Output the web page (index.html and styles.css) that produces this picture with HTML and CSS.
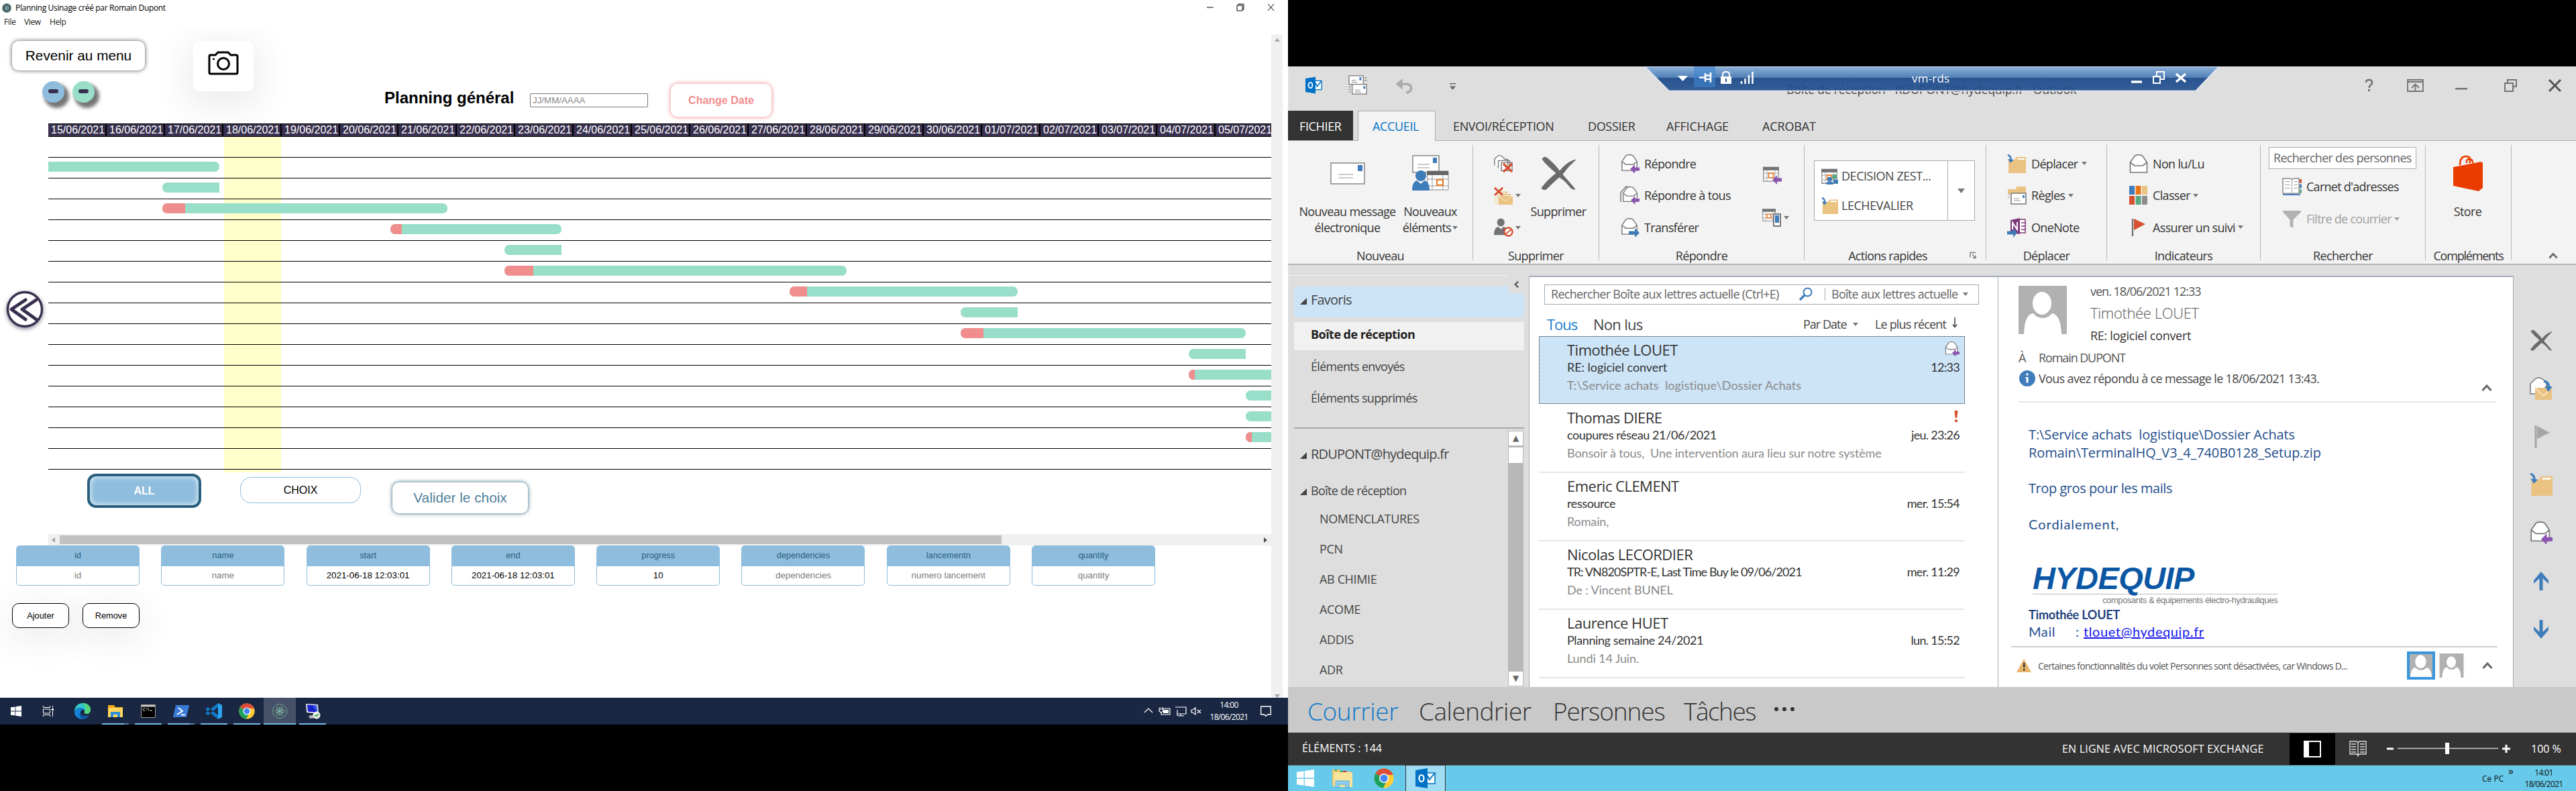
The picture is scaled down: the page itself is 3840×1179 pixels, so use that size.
FILE: index.html
```html
<!DOCTYPE html>
<html lang="fr">
<head>
<meta charset="utf-8">
<title>Planning Usinage</title>
<link rel="stylesheet" href="styles.css">
</head>
<body>
<svg class="sprite" aria-hidden="true">
  <symbol id="env" viewBox="0 0 28 28"><path d="M1.500 12 8 2.500Q14-1 20 2.500L26.500 12V27H1.500Z" fill="#fff" stroke="#777" stroke-width="1.600"/><path d="M1.500 12 8 17H20L26.500 12" fill="none" stroke="#777" stroke-width="1.600"/></symbol>
  <symbol id="reply" viewBox="0 0 28 28"><use href="#env" width="26" height="25"/><path d="M14 22 21 15V19.500H28V24.500H21V29Z" fill="#8a55b0"/></symbol>
  <symbol id="forward" viewBox="0 0 28 28"><use href="#env" width="26" height="25"/><path d="M28 22 21 15V19.500H12V24.500H21V29Z" fill="#3f7cba"/></symbol>
  <symbol id="cal" viewBox="0 0 28 28"><path d="M1 3H27V27H1Z" fill="#fff" stroke="#888" stroke-width="1.500"/><path d="M0 2H28V8H0Z" fill="#737373"/><path d="M7 8V27M21 8V27M1 13H27M1 21H27" stroke="#999"/><path d="M10 13H18V21H10Z" fill="#fff" stroke="#e87722" stroke-width="2"/></symbol>
  <symbol id="move" viewBox="0 0 28 28"><path d="M2 8H11L14 4H28V28H2Z" fill="#eac282"/><path d="M16 6H26V8H15Z" fill="#fff"/><path d="M1 1Q7 3 5.500 11" fill="none" stroke="#3f7cba" stroke-width="2.600"/><path d="M1 7 5 13 10 8Z" fill="#3f7cba"/></symbol>
  <symbol id="cross" viewBox="0 0 54 50"><path d="M3 4Q6-1 11 3 22 12 29 22 40 8 53 5 41 15 33 27 43 38 52 49 47 50 43 44 35 34 28 31 18 40 9 49 4 51 2 47 11 35 24 25 8 12 3 4Z" fill="#6a6a6a" stroke="#6a6a6a"/></symbol>
  <symbol id="person" viewBox="0 0 72 72"><path d="M0 0H72V72H0Z" fill="#b1b1b1"/><ellipse cx="35" cy="26" rx="14" ry="17" fill="#fff"/><path d="M8 72Q9 42 22 41 27 48 36 48 44 48 50 41 63 43 64 72Z" fill="#fff"/></symbol>
  <symbol id="chrome" viewBox="0 0 30 30"><circle cx="15" cy="15" r="14.500" fill="#fc3"/><path d="M15 15 2.400 7.800A14.500 14.500 0 0 1 28.600 10H15Z" fill="#dd4b39"/><path d="M2.400 7.800A14.500 14.500 0 0 0 14 29.500L19.500 18 15 15Z" fill="#1ba15d"/><circle cx="15" cy="15" r="7" fill="#fff"/><circle cx="15" cy="15" r="5.500" fill="#4285f4"/></symbol>
  <symbol id="outlook" viewBox="0 0 30 30"><path d="M16 7H29V23H16Z" fill="#fff" stroke="#0072c6" stroke-width="1.600"/><path d="M17 10 21 17 28 8" fill="none" stroke="#0072c6" stroke-width="2"/><path d="M0 3 18 0V30L0 27Z" fill="#0072c6"/><ellipse cx="9" cy="15" rx="3.500" ry="5" fill="none" stroke="#fff" stroke-width="2.200"/></symbol>
  <symbol id="atom" viewBox="0 0 24 24"><circle cx="12" cy="12" r="11.500" fill="#474e55" stroke="#7cc" stroke-width=".8"/><g fill="none" stroke="#8cc" stroke-width=".8"><ellipse cx="12" cy="12" rx="8" ry="3.200"/><ellipse cx="12" cy="12" rx="8" ry="3.200" transform="rotate(60 12 12)"/><ellipse cx="12" cy="12" rx="8" ry="3.200" transform="rotate(120 12 12)"/></g><circle cx="12" cy="12" r="1.500" fill="#9ff"/></symbol>
  <symbol id="win" viewBox="0 0 16 16"><path d="M0 2.300 6.500 1.400V7.600H0ZM7.300 1.300 16 0V7.600H7.300ZM0 8.400H6.500V14.600L0 13.700ZM7.300 8.400H16V16L7.300 14.700Z" fill="#fff"/></symbol>
  <symbol id="dd" viewBox="0 0 8 5"><path d="M0 0H8L4 5Z" fill="currentColor"/></symbol>
  <symbol id="up" viewBox="0 0 16 10"><path d="M1.500 9 8 2 14.500 9" fill="none" stroke="currentColor" stroke-width="3"/></symbol>
</svg>

<div class="desk">
<section class="screen">
  <div class="title-bar">
    <svg class="app-icon"><use href="#atom"/></svg>
    <span class="app-title">Planning Usinage créé par Romain Dupont</span>
    <svg class="win-btns" viewBox="0 0 101 12"><path d="M0 6H10M45 3H53V11H45ZM47 3V1H55V9H53M91 1 100 11M100 1 91 11" fill="none" stroke="#000"/></svg>
  </div>
  <nav class="menu"><span>File</span><span>View</span><span>Help</span></nav>

  <div class="app">
    <main class="app-main">
      <div class="top">
        <div class="top-left">
          <button class="back">Revenir au menu</button>
          <div class="zoomers"><i class="dot blue"></i><i class="dot green"></i></div>
        </div>
        <div class="camera">
          <svg viewBox="0 0 46 36"><path d="M4 6H11L15 2H30L34 6H42Q44 6 44 8V32Q44 34 42 34H4Q2 34 2 32V8Q2 6 4 6Z" fill="none" stroke="#000" stroke-width="3"/><circle cx="23" cy="19" r="8.500" fill="none" stroke="#000" stroke-width="3"/><circle cx="8.500" cy="12" r="1.600"/></svg>
        </div>
        <div class="heading">
          <h1>Planning général</h1>
          <div class="date-input">JJ/MM/AAAA</div>
          <button class="change">Change Date</button>
        </div>
      </div>
      <div class="mid">
        <div class="prev"><svg viewBox="0 0 60 60"><circle cx="30" cy="30" r="25.500" fill="#fff" stroke="#38304e" stroke-width="3.400"/><path d="M31 16 10 30 31 45M47 16 26 30 47 45" fill="none" stroke="#38304e" stroke-width="5" stroke-linecap="round" stroke-linejoin="round"/></svg></div>
        <div class="gantt">
          <div class="days"><b>15/06/2021</b><b>16/06/2021</b><b>17/06/2021</b><b>18/06/2021</b><b>19/06/2021</b><b>20/06/2021</b><b>21/06/2021</b><b>22/06/2021</b><b>23/06/2021</b><b>24/06/2021</b><b>25/06/2021</b><b>26/06/2021</b><b>27/06/2021</b><b>28/06/2021</b><b>29/06/2021</b><b>30/06/2021</b><b>01/07/2021</b><b>02/07/2021</b><b>03/07/2021</b><b>04/07/2021</b><b>05/07/2021</b></div>
          <div class="rows">
            <div class="row"></div>
            <div class="row"><div class="bar cont" style="margin-left:0;width:255px"></div></div>
            <div class="row"><div class="bar short" style="margin-left:170px;width:85px"></div></div>
            <div class="row"><div class="bar" style="margin-left:170px;width:425px"><i style="width:34px"></i></div></div>
            <div class="row"><div class="bar" style="margin-left:510px;width:255px"><i style="width:17px"></i></div></div>
            <div class="row"><div class="bar short" style="margin-left:680px;width:85px"></div></div>
            <div class="row"><div class="bar" style="margin-left:680px;width:510px"><i style="width:43px"></i></div></div>
            <div class="row"><div class="bar" style="margin-left:1105px;width:340px"><i style="width:26px"></i></div></div>
            <div class="row"><div class="bar short" style="margin-left:1360px;width:85px"></div></div>
            <div class="row"><div class="bar" style="margin-left:1360px;width:425px"><i style="width:34px"></i></div></div>
            <div class="row"><div class="bar short" style="margin-left:1700px;width:85px"></div></div>
            <div class="row"><div class="bar" style="margin-left:1700px;width:170px"><i style="width:9px"></i></div></div>
            <div class="row"><div class="bar" style="margin-left:1785px;width:85px"></div></div>
            <div class="row"><div class="bar" style="margin-left:1785px;width:85px"></div></div>
            <div class="row"><div class="bar" style="margin-left:1785px;width:170px"><i style="width:9px"></i></div></div>
            <div class="row"></div>
          </div>
          <div class="choices"><button class="all">ALL</button><button class="choix">CHOIX</button><button class="valid">Valider le choix</button></div>
          <div class="hscroll"><svg viewBox="0 0 5 8"><path d="M5 0V8L0 4Z" fill="#a3a3a3"/></svg><i class="thumb"></i><svg class="end" viewBox="0 0 5 8"><path d="M0 0V8L5 4Z" fill="#505050"/></svg></div>
        </div>
      </div>
      <div class="fields">
        <div class="field"><div>id</div><p>id</p></div>
        <div class="field"><div>name</div><p>name</p></div>
        <div class="field set"><div>start</div><p>2021-06-18 12:03:01</p></div>
        <div class="field set"><div>end</div><p>2021-06-18 12:03:01</p></div>
        <div class="field set"><div>progress</div><p>10</p></div>
        <div class="field"><div>dependencies</div><p>dependencies</p></div>
        <div class="field"><div>lancementn</div><p>numero lancement</p></div>
        <div class="field"><div>quantity</div><p>quantity</p></div>
      </div>
      <div class="ops"><button>Ajouter</button><button>Remove</button></div>
    </main>
    <div class="vscroll"><svg viewBox="0 0 8 5"><path d="M0 5H8L4 0Z" fill="#a3a3a3"/></svg><svg viewBox="0 0 8 5"><path d="M0 0H8L4 5Z" fill="#a3a3a3"/></svg></div>
  </div>

  <div class="taskbar">
    <div class="task start"><svg class="i16"><use href="#win"/></svg></div>
    <div class="task start"><svg class="i16" viewBox="0 0 16 16"><path d="M.5 0V2.500H10.500V0M.5 5H10.500V11H.5ZM.5 16V13.500H10.500V16M14.500 0V2.500M14.500 8V16" fill="none" stroke="#fff"/><path d="M13 4H16V7H13Z" fill="#fff"/></svg></div>
    <div class="task edge"><svg class="i24" viewBox="0 0 24 24"><path d="M0 13C0 4 6 0 12 0 20 0 24 5 24 10 24 14 21 16 18 16 14 16 15 14 15 12 15 9 12 7 9 7 4 7 1 10 0 13Z" fill="#34c6c9"/><path d="M12 0C20 0 24 5 24 10 24 14 21 16 18 16 14 16 15 14 15 12 18 8 16 3 12 0Z" fill="#55d67a"/><path d="M0 13C1 9 5 7 9 7 12 7 14 8 15 10 11 9 9 12 9 14 9 19 15 21 22 18 19 22 16 24 12 24 5 24 0 19 0 13Z" fill="#1683d8"/><path d="M9 14C9 19 15 21 22 18 19 22 16 24 13 24 8 23 6 18 9 14Z" fill="#0e56a4"/></svg></div>
    <div class="task run multi"><svg class="i22" viewBox="0 0 22 20"><path d="M0 1H9L11 4H22V19H0Z" fill="#f0a91b"/><path d="M0 5H22V19H0Z" fill="#ffd55e"/><path d="M4 19V11H18V19H14V15H8V19Z" fill="#2b8fd8"/></svg></div>
    <div class="task run"><svg class="i22" viewBox="0 0 22 20"><path d="M.5.500H21.500V19.500H.5Z" fill="#000" stroke="#999"/><path d="M1 1H21V3.500H1Z" fill="#ccc"/><path d="M6 6C4 5 3 6 3 7.500S4 10 6 9M8 6V7M8 8V9M10 5 12 9M13 9H17" stroke="#ddd" fill="none"/></svg></div>
    <div class="task run multi"><svg class="i24" viewBox="0 0 24 20"><path d="M4 1H24L20 19H0Z" fill="#3a7bd5"/><path d="M8 5 14 10 6 15M12 15.500H18" stroke="#fff" stroke-width="2" fill="none"/></svg></div>
    <div class="task run"><svg class="i24" viewBox="0 0 24 24"><path d="M18 0 24 3V21L18 24Z" fill="#2ba3ef"/><path d="M18 0V6L3 18 0 16V14ZM18 24V18L3 6 0 8V10Z" fill="#1279c4"/></svg></div>
    <div class="task run"><svg class="i24"><use href="#chrome"/></svg></div>
    <div class="task run active"><svg class="i22"><use href="#atom"/></svg></div>
    <div class="task run"><svg class="i24" viewBox="0 0 24 24"><path d="M2 1 20 2 21 16 3 14Z" fill="#dde"/><path d="M4 2.500 18 3.500 19 14 5 12.500Z" fill="#1522c8"/><path d="M12 3.200 18 3.500 19 14Z" fill="#3b57ea"/><path d="M6 19 16 17 18 22 8 23Z" fill="#bbb"/><circle cx="18" cy="18" r="5.500" fill="#eee"/><path d="M15 20 18 17M18 20 21 16" stroke="#3a3" stroke-width="1.500"/></svg></div>
    <div class="tray">
      <svg class="tray-icons" viewBox="0 0 86 16"><g fill="none" stroke="#fff" stroke-width="1.200"><path d="M1 10 7 4 13 10"/><path d="M28 4H39V13H26V9"/><path d="M24 2V5M28 2V5M23 5H29V8L26 10 23 8Z"/><path d="M47 2H63V12H50M55 12V15M51 15H60M50 6V15"/><path d="M71 6H73L77 3V13L73 10H71ZM80 6 85 11M85 6 80 11"/></g><path d="M29 6H37V11H29Z" fill="#fff"/></svg>
      <div class="clock"><span>14:00</span><span>18/06/2021</span></div>
      <svg class="notif" viewBox="0 0 16 17"><path d="M.7 1H15.300V13H10.500L8 15.500 5.500 13H.7Z" fill="none" stroke="#fff" stroke-width="1.300"/></svg>
    </div>
  </div>
</section>

<section class="screen outlook">
  <header class="o-title">
    <svg class="qat1"><use href="#outlook"/></svg>
    <svg class="qat2" viewBox="0 0 30 30"><g fill="#fff" stroke="#777" stroke-width="1.300"><path d="M1 1H23V14H1ZM6 14H28V29H6Z"/></g><path d="M17 3H20V8H17ZM23 17H26V21H23Z" fill="#3f7cba"/><path d="M5 8H12M5 11H14M10 23H18M10 26H20M24 4H29M24 8H29M0 18H4M0 22H4M0 26H4" stroke="#888"/></svg>
    <svg class="qat3" viewBox="0 0 28 24"><path d="M2 9H17Q25 9 25 16 25 22 17 23" fill="none" stroke="#ababab" stroke-width="4"/><path d="M0 9 11 0V18Z" fill="#ababab"/></svg>
    <svg class="qat4" viewBox="0 0 9 10"><path d="M0 0H9V1.500H0ZM0 4.500H9L4.500 10Z" fill="#666"/></svg>
    <span class="o-caption">Boîte de réception - RDUPONT@hydequip.fr - Outlook</span>
    <svg class="o-btns" viewBox="0 0 294 20"><path d="M3 6Q3 2 7.500 2T12 6Q12 8.500 9.500 10 7.500 11.500 7.500 14" fill="none" stroke="#737373" stroke-width="2.600"/><path d="M6 16H9V19H6Z" fill="#737373"/><g fill="none" stroke="#737373" stroke-width="1.800"><path d="M65 2H88V19H65ZM65 5H88M76.500 18V9M71 14 76.500 8.500 82 14"/><path d="M210 7H222V19H210ZM214 7V2H227V12H222" stroke-width="2"/></g><path d="M136 14H154V16.500H136Z" fill="#737373"/><path d="M276 2 293 19M293 2 276 19" stroke="#555" stroke-width="3"/></svg>
    <div class="rdp">
      <svg viewBox="0 0 856 38"><defs><linearGradient id="g" x2="0" y2="1"><stop offset="0" stop-color="#8fb3de"/><stop offset=".46" stop-color="#4f7fb5"/><stop offset=".47" stop-color="#1f4d8d" stop-opacity=".95"/><stop offset="1" stop-color="#1f4d8d" stop-opacity=".88"/></linearGradient></defs><path d="M0 0H856L821 36.500H36Z" fill="url(#g)" stroke="#e8eef6" stroke-width="1.500"/><path d="M73 0H105V31H73Z" fill="#3f86cf" opacity=".6"/><path d="M49 14H64L56.500 22Z" fill="#fff"/><path d="M81 16.500H90M90 10V23M90 13.500H98M90 19H98M98 9V24" stroke="#fff" stroke-width="2.500" fill="none"/><path d="M113 15H129V26H113Z" fill="#fff"/><path d="M116 15V12Q116 8 121 8T126 12V15" stroke="#fff" stroke-width="2" fill="none"/><path d="M120 18H122V23H120Z" fill="#26528f"/><path d="M144 26V22M149.500 26V18M155 26V13M160.500 26V8" stroke="#fff" stroke-width="2.500"/><path d="M725 23H741" stroke="#fff" stroke-width="3.500"/><path d="M758 15H768V25H758ZM763 15V8H774V19H768" stroke="#fff" stroke-width="2" fill="none"/><path d="M792 11 806 23M806 11 792 23" stroke="#fff" stroke-width="3.500"/></svg>
      <span>vm-rds</span>
    </div>
  </header>
  <nav class="tabs"><span class="file">FICHIER</span><span class="cur">ACCUEIL</span><span class="t3">ENVOI/RÉCEPTION</span><span class="t4">DOSSIER</span><span class="t5">AFFICHAGE</span><span class="t6">ACROBAT</span></nav>

  <div class="ribbon">
    <div class="grp g1">
      <div class="g-body">
        <div class="big b1"><svg viewBox="0 0 52 54"><path d="M1 12H51V43H1Z" fill="#fff" stroke="#888" stroke-width="1.500"/><path d="M41 15H48V24H41Z" fill="#3f7cba"/><path d="M12 29H34M12 34H34" stroke="#bbb" stroke-width="1.500"/></svg><span>Nouveau message<br>électronique</span></div>
        <div class="big b2"><svg viewBox="0 0 54 54"><path d="M1 1H40V26H1Z" fill="#fff" stroke="#888" stroke-width="1.500"/><path d="M31 4H37V12H31Z" fill="#3f7cba"/><path d="M8 14H26M8 19H26" stroke="#bbb" stroke-width="1.500"/><path d="M23 24H54V52H23Z" fill="#fff" stroke="#888"/><path d="M22 24H54V30H22Z" fill="#666"/><path d="M30 30V52M46 30V52M23 36H54M23 46H54" stroke="#999"/><path d="M37 37H46V45H37Z" fill="#fff" stroke="#e87722" stroke-width="2"/><circle cx="13" cy="31" r="8" fill="#3f7cba"/><path d="M0 53Q0 40 7 38L13 43 19 38Q26 40 26 53Z" fill="#3f7cba"/></svg><span>Nouveaux<br>éléments <svg class="dd"><use href="#dd"/></svg></span></div>
      </div><h2>Nouveau</h2>
    </div>
    <div class="grp g2">
      <div class="g-body">
        <div class="stack">
          <svg class="ic" viewBox="0 0 30 28"><path d="M1 17V7Q9-5 17 7H22V17M7 21V9H25V21M12 25V12H29V25Z" fill="#fff" stroke="#777" stroke-width="1.500"/><path d="M15 14 29 27M29 14 15 27" stroke="#d64f2f" stroke-width="3.500"/></svg>
          <span><svg class="ic" viewBox="0 0 30 28"><path d="M6 14V8H20V12M9 12H27" stroke="#eac282" stroke-width="2" fill="none"/><path d="M7 14H30V28H7Z" fill="#eac282"/><path d="M7 14 18 22 30 14M2 16V26M4.500 14V28" stroke="#f6e0b8" fill="none" stroke-width="1.500"/><path d="M1 1 14 13M14 1 1 13" stroke="#d64f2f" stroke-width="3"/></svg><svg class="dd"><use href="#dd"/></svg></span>
          <span><svg class="ic" viewBox="0 0 30 28"><ellipse cx="11" cy="6" rx="6" ry="6.500" fill="#737373"/><path d="M0 26Q0 14 7 13L11 17 15 13Q20 14 21 18V26Z" fill="#737373"/><circle cx="23" cy="21" r="6.500" fill="#fff" stroke="#d64f2f" stroke-width="2.500"/><path d="M18 25 28 17" stroke="#d64f2f" stroke-width="2"/></svg><svg class="dd"><use href="#dd"/></svg></span>
        </div>
        <div class="big b3"><svg><use href="#cross"/></svg><span>Supprimer</span></div>
      </div><h2>Supprimer</h2>
    </div>
    <div class="grp g3">
      <div class="g-body">
        <div class="stack w1">
          <span><svg class="ic"><use href="#reply"/></svg>Répondre</span>
          <span><svg class="ic" viewBox="0 0 28 28"><path d="M0 24V10L8 1 12 2" fill="none" stroke="#777" stroke-width="1.500"/><use href="#reply" x="2" width="26" height="28"/></svg>Répondre à tous</span>
          <span><svg class="ic"><use href="#forward"/></svg>Transférer</span>
        </div>
        <div class="pair">
          <svg class="ic" viewBox="0 0 30 28"><use href="#cal" width="26" height="24"/><path d="M15 21 22 14V18.500H29V23.500H22V28Z" fill="#8a55b0"/></svg>
          <span><svg class="ic" viewBox="0 0 30 28"><use href="#cal" width="20" height="20"/><path d="M17 9H27V27H17Z" fill="#fff" stroke="#777" stroke-width="2"/><path d="M19 11H25V22H19Z" fill="#3f7cba"/></svg><svg class="dd"><use href="#dd"/></svg></span>
        </div>
      </div><h2>Répondre</h2>
    </div>
    <div class="grp g4">
      <div class="g-body"><div class="gallery"><div>
        <span><svg class="i25" viewBox="0 0 28 28"><use href="#cal" width="27" height="27"/><circle cx="22" cy="15" r="4" fill="#5aa784"/><circle cx="14" cy="19" r="4" fill="#3f7cba"/><path d="M8 28Q8 22 14 23 20 22 20 28ZM20 26V20H28V27Z" fill="#3f7cba"/></svg>DECISION ZEST...</span>
        <span><svg class="i25"><use href="#move"/></svg>LECHEVALIER</span></div><i><svg class="dd"><use href="#dd"/></svg></i></div></div>
      <h2>Actions rapides<svg class="launch" viewBox="0 0 11 10"><path d="M1 8V1H9M4 4 9 9M9 5V9H5" fill="none" stroke="#777" stroke-width="1.300"/></svg></h2>
    </div>
    <div class="grp g5">
      <div class="g-body"><div class="stack w2">
        <span><svg class="ic"><use href="#move"/></svg>Déplacer<svg class="dd"><use href="#dd"/></svg></span>
        <span><svg class="ic" viewBox="0 0 28 28"><path d="M1 5H12L15 1H28V12H1Z" fill="#eac282"/><path d="M6 11H28V27H6Z" fill="#fff" stroke="#777" stroke-width="1.500"/><path d="M23 14H26V18H23Z" fill="#3f7cba"/><path d="M10 19H18M10 22H20M1 13H4M1 17H4" stroke="#999"/></svg>Règles<svg class="dd"><use href="#dd"/></svg></span>
        <span><svg class="ic" viewBox="0 0 28 28"><path d="M5 3 19 0V24L5 22Z" fill="#80397b"/><path d="M19 2H27V22H19M21 7H28M21 12H28M21 17H28" fill="#fff" stroke="#80397b" stroke-width="1.500"/><path d="M8 17V7L15 17V6" fill="none" stroke="#fff" stroke-width="2"/><path d="M15 22 9 15V19.500H0V24.500H9V29Z" fill="#3f7cba"/></svg>OneNote</span>
      </div></div><h2>Déplacer</h2>
    </div>
    <div class="grp g6">
      <div class="g-body"><div class="stack w3">
        <span><svg class="ic"><use href="#env"/></svg>Non lu/Lu</span>
        <span><svg class="ic" viewBox="0 0 28 28"><path d="M0 0H8V13H0Z" fill="#3f7cba"/><path d="M9.500 0H17.500V13H9.500Z" fill="#e8741a"/><path d="M19 0H27V13H19Z" fill="#eac282"/><path d="M0 15H8V28H0Z" fill="#d64f2f"/><path d="M9.500 15H17.500V28H9.500Z" fill="#5aa784"/><path d="M19 15H27V28H19Z" fill="#8c8c8c"/></svg>Classer<svg class="dd"><use href="#dd"/></svg></span>
        <span><svg class="ic" viewBox="0 0 28 28"><path d="M5 1V27" stroke="#777" stroke-width="2.500"/><path d="M7 1 24 9 7 18Z" fill="#d64f2f"/></svg>Assurer un suivi<svg class="dd"><use href="#dd"/></svg></span>
      </div></div><h2>Indicateurs</h2>
    </div>
    <div class="grp g7">
      <div class="g-body find">
        <div class="people">Rechercher des personnes</div>
        <span><svg class="ic" viewBox="0 0 30 28"><path d="M1 1H13L15 3 17 1H26V24H17L15 26 13 24H1Z" fill="#fff" stroke="#888" stroke-width="1.500"/><path d="M4 6H12M4 11H12M4 16H12M18 6H24M18 11H24M18 16H24M15 3V25" stroke="#999"/><path d="M1 26H28" stroke="#3f7cba" stroke-width="2"/><path d="M27 2H30V8H27Z" fill="#d64f2f"/><path d="M27 10H30V16H27Z" fill="#3f7cba"/><path d="M27 18H30V24H27Z" fill="#5aa784"/></svg>Carnet d'adresses</span>
        <span class="off"><svg class="ic" viewBox="0 0 30 28"><path d="M1 1H29V3L17 15V28L12 25V15L1 3Z" fill="#b1b1b1"/></svg>Filtre de courrier<svg class="dd"><use href="#dd"/></svg></span>
      </div><h2>Rechercher</h2>
    </div>
    <div class="grp g8">
      <div class="g-body"><div class="big b4"><svg viewBox="0 0 44 54"><path d="M10 15Q10 2 19 2T24 12M20 12Q19 6 24 6T29 12" fill="none" stroke="#eb3c00" stroke-width="2.500"/><path d="M0 18 42 10 44 12V49L38 54 0 46Z" fill="#eb3c00"/></svg><span>Store</span></div></div><h2>Compléments</h2>
    </div>
    <svg class="collapse"><use href="#up"/></svg>
  </div>

  <div class="panes">
    <aside class="folders">
      <div class="fav"><span>Favoris</span><i><svg viewBox="0 0 8 12"><path d="M7 1 2 6 7 11" fill="none" stroke="#555" stroke-width="2.500"/></svg></i></div>
      <div class="here">Boîte de réception</div>
      <div class="f-item">Éléments envoyés</div>
      <div class="f-item">Éléments supprimés</div>
      <div class="tree">
        <div class="t-list">
          <div class="acct">RDUPONT@hydequip.fr</div><div class="inbox">Boîte de réception</div>
          <div class="sub first">NOMENCLATURES</div><div class="sub">PCN</div><div class="sub">AB CHIMIE</div><div class="sub">ACOME</div><div class="sub">ADDIS</div><div class="sub">ADR</div>
        </div>
        <div class="t-scroll"><b>▲</b><b class="th"></b><b class="dn">▼</b></div>
      </div>
    </aside>
    <section class="mails">
      <div class="search"><span class="q">Rechercher Boîte aux lettres actuelle (Ctrl+E)</span><svg class="mag" viewBox="0 0 20 20"><circle cx="12.500" cy="7.500" r="6" fill="none" stroke="#3f7cba" stroke-width="2"/><path d="M8 12 1 19" stroke="#3f7cba" stroke-width="3.200"/></svg><span class="scope">Boîte aux lettres actuelle</span><svg class="dd"><use href="#dd"/></svg></div>
      <div class="sort"><span class="tous">Tous</span><span class="nl">Non lus</span><span class="pd">Par Date<svg class="dd"><use href="#dd"/></svg></span><span class="lp">Le plus récent</span><svg class="arr" viewBox="0 0 8 16"><path d="M4 0V14M.8 10.500 4 14.500 7.200 10.500" fill="none" stroke="#444" stroke-width="1.500"/></svg></div>
      <article class="mail sel"><div class="l1"><span>Timothée LOUET</span><svg><use href="#reply"/></svg></div><div class="l2"><span class="sub1">RE: logiciel convert</span><time>12:33</time></div><p class="pv1">T:\Service achats&nbsp; logistique\Dossier Achats</p></article>
      <article class="mail"><div class="l1"><span>Thomas DIERE</span><em><svg viewBox="0 0 6 17"><path d="M.5 0H5.500L4.300 11H1.700ZM1 13.500H5V17H1Z" fill="#d64f2f"/></svg></em></div><div class="l2"><span>coupures réseau 21/06/2021</span><time>jeu. 23:26</time></div><p>Bonsoir à tous,&nbsp; Une intervention aura lieu sur notre système</p></article>
      <article class="mail"><div class="l1"><span>Emeric CLEMENT</span></div><div class="l2"><span>ressource</span><time>mer. 15:54</time></div><p>Romain,</p></article>
      <article class="mail"><div class="l1"><span>Nicolas LECORDIER</span></div><div class="l2"><span class="sub4">TR: VN820SPTR-E, Last Time Buy le 09/06/2021</span><time>mer. 11:29</time></div><p>De : Vincent BUNEL</p></article>
      <article class="mail"><div class="l1"><span>Laurence HUET</span></div><div class="l2"><span>Planning semaine 24/2021</span><time>lun. 15:52</time></div><p>Lundi 14 Juin.</p></article>
    </section>
    <section class="reader">
      <div class="r-head"><svg class="avatar"><use href="#person"/></svg><div><div class="r-date">ven. 18/06/2021 12:33</div><div class="r-name">Timothée LOUET</div><div class="r-subj">RE: logiciel convert</div></div></div>
      <div class="r-to"><span>À</span><b>Romain DUPONT</b></div>
      <div class="r-info"><svg viewBox="0 0 24 24"><circle cx="12" cy="12" r="12" fill="#3f7cba"/><path d="M10.500 4.500H13.500V7.500H10.500ZM9.500 10H13.500V18.500H10.500V12H9.500Z" fill="#fff"/></svg><span>Vous avez répondu à ce message le 18/06/2021 13:43.</span><svg class="upi"><use href="#up"/></svg></div>
      <div class="r-body">
        <p class="path">T:\Service achats&nbsp; logistique\Dossier Achats<br>Romain\TerminalHQ_V3_4_740B0128_Setup.zip</p>
        <p class="big-files">Trop gros pour les mails</p>
        <p class="bye">Cordialement,</p>
        <div class="logo">HYDEQUIP</div>
        <div class="tagline">composants &amp; équipements électro-hydrauliques</div>
        <p class="sig">Timothée LOUET</p>
        <p class="mailto"><span>Mail</span><span>:</span><a>tlouet@hydequip.fr</a></p>
      </div>
      <div class="r-foot"><svg class="warn" viewBox="0 0 22 20"><path d="M11 0 22 20H0Z" fill="#e8b66a"/><path d="M10 6H12.500V13H10ZM10 15H12.500V17.500H10Z" fill="#333"/></svg><span>Certaines fonctionnalités du volet Personnes sont désactivées, car Windows D...</span><svg class="p1"><use href="#person"/></svg><svg class="p2"><use href="#person"/></svg><svg class="upi"><use href="#up"/></svg></div>
    </section>
    <aside class="side">
      <svg viewBox="0 0 54 50"><use href="#cross"/></svg>
      <svg viewBox="0 0 34 34"><path d="M1 25V10L8 3Q13-1 19 3L25 8V25Z" fill="#fff" stroke="#777" stroke-width="1.500"/><path d="M8 16H33V34H8Z" fill="#eac282"/><path d="M8 16 20 28 33 16" fill="none" stroke="#f6e0b8" stroke-width="2"/><path d="M21 6Q30 8 28 18" fill="none" stroke="#3f7cba" stroke-width="3.500"/><path d="M22 14 28 22 34 14Z" fill="#3f7cba"/></svg>
      <svg viewBox="0 0 34 34"><path d="M9 0V34" stroke="#a6a6a6" stroke-width="3"/><path d="M11 1 30 11 11 20Z" fill="#a6a6a6"/></svg>
      <svg><use href="#move"/></svg>
      <svg><use href="#reply"/></svg>
      <svg viewBox="0 0 34 34"><path d="M17 3 28 16V21L19.500 13V31H14.500V13L6 21V16Z" fill="#3f7cba"/></svg>
      <svg viewBox="0 0 34 34"><path d="M17 31 28 18V13L19.500 21V3H14.500V21L6 13V18Z" fill="#3f7cba"/></svg>
    </aside>
  </div>

  <nav class="modules"><span class="m1">Courrier</span><span class="m2">Calendrier</span><span class="m3">Personnes</span><span class="m4">Tâches</span><svg viewBox="0 0 32 6"><g fill="#333"><circle cx="4" cy="3" r="3"/><circle cx="16" cy="3" r="3"/><circle cx="28" cy="3" r="3"/></g></svg></nav>
  <footer class="status"><span class="count">ÉLÉMENTS : 144</span><span class="online">EN LIGNE AVEC MICROSOFT EXCHANGE</span>
    <div class="view"><svg viewBox="0 0 26 25"><path d="M1 1H25V24H1Z" fill="none" stroke="#fff" stroke-width="2"/><path d="M1 1H8V24H1Z" fill="#fff"/></svg></div>
    <svg class="book" viewBox="0 0 26 24"><path d="M1 1H11L13 3 15 1H25V20H15L13 22 11 20H1ZM13 3V24M3 5H10M3 9H10M3 13H10M3 17H10M16 5H23M16 9H23M16 13H23M16 17H23" fill="none" stroke="#ddd" stroke-width="1.400"/></svg>
    <svg class="slider" viewBox="0 0 184 18"><path d="M0 9H10M172 9H184M178 3V15" stroke="#fff" stroke-width="3"/><path d="M16 8.500H166" stroke="#ccc" stroke-width="1.500"/><path d="M87 0H93V17H87Z" fill="#fff"/></svg>
    <span class="pct">100 %</span></footer>
  <div class="taskbar2">
    <svg class="w8"><use href="#win"/></svg>
    <svg class="fold" viewBox="0 0 32 30"><path d="M1 2H12L14 5H28V26H1Z" fill="#e9c866"/><path d="M3 6H31V28H3Z" fill="#f7e39c"/><path d="M5 2H8V4H5ZM13 4H16V6H13Z" fill="#2a9d3a"/><path d="M17 4H22V6H17Z" fill="#c33"/><path d="M6 29V19H26V29H21V24H11V29Z" fill="#8fd0f0" stroke="#4fa8d8"/></svg>
    <svg class="chr"><use href="#chrome"/></svg>
    <div class="tile"><svg><use href="#outlook"/></svg></div>
    <span class="pc">Ce PC</span><span class="raq">»</span>
    <div class="clock dark"><span>14:01</span><span>18/06/2021</span></div>
  </div>
</section>
</div>
</body>
</html>
```
FILE: styles.css
```css
* { box-sizing: border-box; }
body { margin: 0; background: #000; font-family: "Open Sans", "Noto Sans", sans-serif; }
h1, h2, p { margin: 0; }
svg { display: block; flex: none; overflow: visible; }
.sprite { position: absolute; width: 0; height: 0; overflow: hidden; }
button { font-family: inherit; padding: 0; border: 0; background: #fff; white-space: nowrap; }
.desk { display: flex; width: 3840px; height: 1179px; overflow: hidden; }
.screen { width: 1920px; height: 1179px; flex: none; overflow: hidden; white-space: nowrap; }

/* planning window */
.title-bar { height: 23px; background: #fff; display: flex; align-items: center; padding-left: 3px; font-size: 12px; letter-spacing: -.34px; }
.app-icon { width: 14px; height: 14px; margin-right: 6px; }
.app-title { flex: 1; }
.win-btns { width: 101px; height: 12px; margin: 0 20px 2px 0; }
.menu { height: 20px; background: #fff; display: flex; font-size: 12px; line-height: 20px; letter-spacing: -.37px; padding-left: 6px; color: #222; }
.menu span:nth-child(1) { width: 30px; }
.menu span:nth-child(2) { width: 38px; }
.app { height: 997px; background: #fff; display: flex; overflow: hidden; font-family: "Liberation Sans", Arial, sans-serif; }
.app-main { width: 1895px; overflow: hidden; }
.top { height: 141px; display: grid; grid-template-columns: 288px 285px 1fr; }
.back { display: block; margin: 18px 0 0 18px; width: 198px; height: 44px; border-radius: 10px; font-size: 20.8px; box-shadow: 0 0 6px #555; }
.zoomers { display: flex; gap: 12px; margin: 16px 0 0 63px; }
.dot { width: 33px; height: 32px; border-radius: 50%; display: flex; align-items: center; justify-content: center; box-shadow: 5px 6px 5px 2px #777; }
.dot::after { content: ""; width: 15px; height: 6px; border-radius: 3px; background: #38304e; margin-bottom: 2px; }
.blue { background: #8ebddd; }
.green { background: #98dec9; position: relative; }
.camera { position: relative; z-index: 1; margin-top: 18px; width: 90px; height: 75px; border-radius: 10px; background: #fff; box-shadow: 0 13px 50px 10px rgba(50, 60, 90, .09); display: flex; justify-content: center; padding-top: 15px; }
.camera svg { width: 46px; height: 36px; }
.heading { display: flex; align-items: center; height: 49px; margin-top: 82px; }
.heading h1 { width: 217px; font-size: 24px; margin-top: -8px; }
.date-input { width: 176px; height: 21px; border: 1px solid #767676; border-radius: 2px; padding-left: 3px; font-size: 13.33px; line-height: 19px; color: #888; }
.change { margin-left: 34px; width: 150px; height: 49px; border-radius: 10px; font-size: 16px; font-weight: 700; color: #f08d8d; box-shadow: 0 0 7px #f08080; }
.mid { display: grid; grid-template-columns: 72px 1823px; height: 629px; }
.prev { padding: 247px 0 0 7px; }
.prev svg { width: 60px; height: 60px; filter: drop-shadow(0 2px 3px rgba(56, 48, 78, .6)); }
.gantt { overflow: hidden; }
.days { display: flex; height: 20px; background: #38304e; border: solid #000; border-width: 1px 0; }
.days b { flex: none; width: 87px; border-right: 2px solid #000; font-size: 16px; font-weight: 400; line-height: 18px; color: #fff; padding-left: 4px; }
.rows { height: 500px; background: linear-gradient(#ffffcb, #ffffcb) 262px 0 / 85px 100% no-repeat; }
.row { height: 31px; border-bottom: 1px solid #000; padding-top: 6px; overflow: hidden; }
.bar { height: 15px; border-radius: 7px; background: #98dec9; overflow: hidden; }
.bar i { display: block; height: 15px; background: #f08d8d; }
.cont { border-radius: 0 7px 7px 0; }
.short { border-radius: 7px 0 0 7px; }
.choices { height: 92px; display: flex; align-items: flex-start; padding-left: 58px; }
.all { margin-top: 2px; width: 170px; height: 51px; border: 4px solid #2a607f; border-radius: 13px; background: #8ebddd; color: #fff; font: 700 16px "Liberation Sans", Arial, sans-serif; box-shadow: inset 0 0 8px #fff; }
.choix { margin: 7px 0 0 58px; width: 180px; height: 39px; border: 1px solid #8ebddd; border-radius: 16px; font-size: 16px; }
.valid { margin: 15px 0 0 47px; width: 202px; height: 46px; border-radius: 10px; font-size: 20.8px; color: #51809a; box-shadow: 0 0 6px #2a607f; }
.hscroll { height: 17px; background: #f0f0f0; display: flex; align-items: center; padding-left: 5px; }
.hscroll svg { width: 5px; height: 8px; }
.thumb { width: 1404px; height: 13px; background: #c1c1c1; margin-left: 7px; }
.hscroll .end { margin: 0 6px 0 auto; }
.fields { display: flex; gap: 32.3px; padding-left: 24px; }
.field { width: 184px; height: 60px; text-align: center; border: 1px solid #8ebddd; border-radius: 5px; overflow: hidden; font-size: 13.33px; color: #7b7b7b; }
.field div { height: 30px; background: #8ebddd; color: #2a607f; font-size: 12.8px; line-height: 28px; }
.field p { line-height: 28px; }
.set p { color: #000; }
.ops { display: flex; gap: 20px; padding: 26px 0 0 18px; }
.ops button { width: 85px; height: 37px; border: 1px solid #000; border-radius: 10px; font-size: 12.8px; box-shadow: 0 13px 50px 5px rgba(50, 60, 90, .09); }
.vscroll { width: 17px; margin-top: 8px; background: #f0f0f0; display: flex; flex-direction: column; justify-content: space-between; align-items: center; padding: 6px 0 0; }
.vscroll svg { width: 8px; height: 5px; }
.taskbar { height: 40px; display: flex; background: #1a2742; }
.task { width: 40px; height: 40px; margin-left: 9px; display: flex; align-items: center; justify-content: center; }
.task.start { width: 48px; margin-left: 0; }
.task.edge { width: 47px; margin-left: 3px; }
.task.run { border-bottom: 2px solid #76b9ed; padding-top: 2px; }
.edge + .task.run { margin-left: 6px; }
.task.multi { border-image: linear-gradient(90deg, #76b9ed 80%, #5581a8 80%) 2; border-width: 0 0 2px; }
.task.run.active { width: 48px; margin: 0 -4px 0 5px; background: #465069; }
.i16 { width: 16px; height: 16px; }
.i22 { width: 22px; height: 22px; }
.i24 { width: 24px; height: 24px; }
.i25 { width: 25px; height: 25px; }
.tray { margin-left: auto; display: flex; align-items: center; color: #fff; padding-right: 25px; }
.tray-icons { width: 86px; height: 16px; }
.clock { width: 64px; margin-left: 9px; text-align: center; font-size: 12px; letter-spacing: -.66px; line-height: 18px; }
.clock span { display: block; }
.notif { width: 16px; height: 17px; margin-left: 15px; }

/* mail client */
.outlook { background: #dedede; border-top: 99px solid #000; color: #333; font-size: 18px; letter-spacing: -.66px; }
.o-title { position: relative; height: 66px; display: flex; }
.qat1 { width: 25px; height: 26px; margin: 15px 0 0 26px; }
.qat2 { width: 29px; height: 29px; margin: 13px 0 0 39px; }
.qat3 { width: 27px; height: 22px; margin: 18px 0 0 41px; }
.qat4 { width: 9px; height: 10px; margin: 25px 0 0 54px; }
.o-caption { margin: 21px 0 0 493px; width: 434px; line-height: 26px; letter-spacing: -.36px; color: #444; }
.o-btns { width: 294px; height: 20px; margin: 18px 0 0 427px; }
.rdp { position: absolute; left: 532px; top: 0; width: 856px; height: 38px; }
.rdp svg { width: 856px; height: 38px; }
.rdp span { position: absolute; left: 398px; top: 5px; color: #fff; font-size: 17px; line-height: 26px; letter-spacing: .2px; }
.tabs { display: flex; height: 45px; line-height: 46px; border-bottom: 1px solid #ababab; letter-spacing: -.35px; color: #333; }
.file { width: 97px; padding-left: 17px; height: 44px; background: #333; color: #fff; }
.cur { margin: 0 26px 0 7px; width: 116px; height: 45px; padding-left: 21px; color: #0072c6; background: #f3f3f3; border: 1px solid #ababab; border-bottom: 0; line-height: 44px; }
.t3 { width: 201px; }
.t4 { width: 117px; }
.t5 { width: 143px; letter-spacing: -.12px; }
.t6 { letter-spacing: -.12px; }
.ribbon { height: 185px; background: #f3f3f3; border-bottom: 2px solid #b4b4b4; display: flex; padding-top: 6px; }
.grp { height: 172px; border-right: 1px solid #b8b8b8; display: flex; flex-direction: column; }
.grp h2 { height: 14px; line-height: 14px; font-size: 18px; font-weight: 400; text-align: center; position: relative; }
.g-body { height: 158px; display: flex; }
.g1 { width: 276px; }
.g2 { width: 188px; }
.g3 { width: 306px; }
.g4 { width: 271px; }
.g5 { width: 180px; }
.g6 { width: 229px; }
.g7 { width: 246px; }
.g8 { width: 128px; }
.big { display: flex; flex-direction: column; align-items: center; line-height: 24px; text-align: center; padding-top: 15px; }
.big > svg { width: 54px; height: 54px; margin-bottom: 18px; }
.big span .dd { display: inline-block; margin: 0 0 4px -2px; }
.b1 { margin-left: 15px; width: 147px; }
.b2 { margin-left: 10px; width: 80px; }
.b3 { width: 84px; margin-left: -6px; }
.b4 { width: 125px; }
.b4 > svg { width: 44px; }
.dd { width: 8px; height: 5px; color: #777; }
.stack { display: flex; flex-direction: column; padding-top: 4px; }
.stack > svg { margin: 10px 0; }
.stack > span { height: 47.5px; display: flex; align-items: center; gap: 7px; }
.stack .ic { width: 28px; height: 28px; }
.g2 .stack { width: 60px; margin-left: 31px; }
.g2 .stack > span { gap: 7px; }
.stack .dd, .find .dd { margin-left: -3px; }
.w1 { margin-left: 32px; width: 211px; }
.w2 { margin-left: 31px; width: 130px; }
.w2 > span { gap: 8px; }
.w3 { margin-left: 33px; width: 180px; }
.pair { display: flex; flex-direction: column; gap: 35px; padding-top: 31px; }
.pair .ic { width: 30px; height: 28px; }
.pair span { display: flex; align-items: center; gap: 2px; }
.gallery { margin: 23px 0 0 14px; width: 240px; height: 90px; border: 1px solid #ababab; background: #fff; display: flex; letter-spacing: -.46px; color: #444; }
.gallery div { width: 198px; }
.gallery span { display: flex; align-items: center; gap: 5px; height: 44px; padding-left: 10px; }
.gallery i { flex: 1; border-left: 1px solid #ababab; display: flex; align-items: center; justify-content: center; }
.gallery i .dd { width: 11px; height: 7px; }
.launch { position: absolute; right: 13px; top: 1px; width: 11px; height: 11px; }
.g4 h2 { padding-right: 22px; padding-left: 0; letter-spacing: -.74px; }
.find { flex-direction: column; padding: 3px 0 0 12px; }
.people { width: 220px; height: 33px; border: 1px solid #ababab; background: #fff; padding-left: 6px; line-height: 31px; letter-spacing: -.73px; color: #666; margin-bottom: 2px; }
.find span { height: 48px; display: flex; align-items: center; gap: 7px; padding-left: 20px; letter-spacing: -.73px; }
.find .ic { width: 29px; height: 27px; }
.off, .off .dd { color: #a0a0a0; }
.g8 h2 { letter-spacing: -1.2px; }
.collapse { width: 14px; height: 10px; margin: 160px 0 0 55px; color: #666; }

.panes { height: 629px; display: flex; }
.folders { width: 352px; padding-top: 15px; flex: none; color: #444; }
.fav { position: relative; height: 64px; border-top: 1px solid #f2f2f2; padding-top: 16px; font-size: 20px; }
.fav span { display: block; margin-left: 9px; height: 46px; line-height: 40px; background: #cde4f7; padding-left: 25px; letter-spacing: -.8px; }
.fav i { position: absolute; right: 0; top: -1px; width: 24px; height: 27px; background: #dedede; display: flex; align-items: center; justify-content: center; }
.fav i svg { width: 7px; height: 12px; }
.fav span::before, .acct::before, .inbox::before { content: ""; display: inline-block; margin: 0 6px 0 -16px; border-left: 10px solid transparent; border-bottom: 10px solid #444; }
.here { margin: 6px 0 1px 9px; height: 42px; background: #f1f1f1; padding-left: 25px; font-weight: 700; line-height: 36px; letter-spacing: -.54px; color: #222; }
.f-item { height: 47px; line-height: 47px; padding-left: 34px; letter-spacing: -.69px; }
.tree { display: flex; margin: 20px 0 0 9px; border-top: 2px solid #a8a8a8; height: 387px; overflow: hidden; }
.t-list { width: 319px; padding: 15px 0 0 25px; }
.acct { font-size: 20px; line-height: 46px; letter-spacing: -.8px; }
.inbox { margin-top: 4px; line-height: 54px; height: 54px; letter-spacing: -.64px; }
.sub { height: 45px; line-height: 45px; padding-left: 13px; letter-spacing: -.35px; }
.sub.first { margin-top: -7px; }
.t-scroll { width: 23px; margin-top: 3px; height: 381px; background: #b8b8b8; display: flex; flex-direction: column; border: 1px solid #b8b8b8; }
.t-scroll b { height: 21px; background: #fff; font: 12px/20px "DejaVu Sans", sans-serif; text-align: center; color: #666; letter-spacing: 0; }
.t-scroll .th { height: 23px; margin-top: 3px; }
.t-scroll .dn { margin-top: auto; }
.mails { margin: 16px 0 0 7px; width: 699px; height: 613px; background: #fff; border: 1px solid #a3abb6; border-width: 2px 0 0 1px; flex: none; overflow: hidden; }
.search { margin: 11px 0 0 22px; width: 648px; height: 30px; border: 1px solid #a3abb6; display: flex; align-items: center; color: #666; letter-spacing: -.71px; padding: 0 0 2px 9px; }
.q { width: 370px; }
.mag { width: 20px; height: 20px; }
.scope { margin-left: 18px; border-left: 1px solid #aaa; padding-left: 9px; width: 206px; line-height: 19px; }
.sort { height: 46px; display: flex; align-items: center; padding: 12px 0 0 26px; color: #444; }
.tous { font-size: 22px; width: 69px; color: #1a7dd0; letter-spacing: -1px; }
.nl { font-size: 22px; width: 313px; letter-spacing: -.72px; }
.pd { width: 107px; letter-spacing: -.98px; display: flex; align-items: center; gap: 9px; }
.lp { width: 115px; letter-spacing: -.83px; }
.arr { width: 8px; height: 16px; margin-top: -4px; }
.mail { margin: 0 49px 0 14px; height: 102px; padding: 6px 8px 0 42px; border-bottom: 2px solid #e6e6e6; }
.mail.sel { height: 101px; margin-top: 1px; margin-bottom: 1px; padding: 6px 7px 0 41px; background: #cde4f7; border: 1px dotted #222; }
.l1 { display: flex; justify-content: space-between; height: 27px; line-height: 27px; font-size: 22px; letter-spacing: -.52px; }
.l1 svg { width: 22px; height: 22px; margin-top: 1px; }
.l1 em svg { width: 6px; height: 17px; margin: 3px 2px 0; }
.l2 { display: flex; justify-content: space-between; height: 25px; line-height: 25px; font-family: Lato, sans-serif; letter-spacing: -.4px; }
.l2 time { letter-spacing: -.7px; }
.sub1 { letter-spacing: -.05px; }
.sub4 { letter-spacing: -.9px; }
.mail p { font-family: Lato, sans-serif; line-height: 28px; color: #8a8a8a; letter-spacing: -.12px; }
.mail .pv1 { letter-spacing: .1px; }
.reader { margin-top: 16px; width: 769px; background: #fff; border: 1px solid #a3abb6; border-width: 2px 1px 0 1px; flex: none; padding-left: 30px; color: #555; }
.r-head { display: flex; height: 104px; }
.avatar { width: 72px; height: 72px; margin: 13px 35px 0 0; }
.r-date { margin-top: 7px; line-height: 28px; letter-spacing: -1px; }
.r-name { font-size: 22px; line-height: 36px; font-weight: 300; letter-spacing: -.35px; }
.r-subj { line-height: 32px; letter-spacing: -.3px; color: #333; }
.r-to { display: flex; line-height: 32px; height: 33px; }
.r-to span { width: 30px; }
.r-to b { font-weight: 400; letter-spacing: -1.1px; }
.r-info { display: flex; align-items: center; width: 711px; height: 50px; padding-bottom: 20px; border-bottom: 2px solid #e6e6e6; gap: 5px; letter-spacing: -.66px; color: #444; }
.r-info > svg:first-child { width: 24px; height: 24px; margin-left: 1px; }
.upi { width: 16px; height: 10px; color: #666; }
.r-info .upi { margin: 28px 5px 0 auto; }
.r-body { height: 365px; width: 725px; margin-left: -11px; padding: 34px 0 0 26px; border-bottom: 2px solid #d0d0d0; font-size: 20px; color: #1f4e8c; }
.path { line-height: 27px; letter-spacing: -.1px; }
.big-files { margin-top: 26px; line-height: 28px; letter-spacing: -.44px; }
.bye { margin-top: 25px; line-height: 28px; font-family: Lato, sans-serif; letter-spacing: 1px; }
.logo { margin: 47px 0 0 6px; width: 366px; height: 44px; border-bottom: 1px solid #bbb; font: italic 700 47px/40px "Liberation Sans", Arial, sans-serif; letter-spacing: -.6px; color: #0b57a4; }
.tagline { width: 371px; text-align: right; font: 13px/17px "Liberation Sans", Arial, sans-serif; letter-spacing: -.45px; color: #777; }
.sig { font: 700 18px/27px Lato, sans-serif; letter-spacing: -.2px; color: #1f3f7c; }
.mailto { display: flex; line-height: 22px; font-family: Lato, sans-serif; letter-spacing: .6px; }
.mailto span:first-child { width: 70px; }
.mailto span:nth-child(2) { width: 12px; }
.mailto a { color: #1414ee; text-decoration: underline; }
.r-foot { display: flex; align-items: center; height: 54px; width: 725px; margin-left: -3px; font-size: 14px; letter-spacing: -.72px; }
.warn { width: 22px; height: 20px; margin-right: 10px; }
.r-foot span { width: 550px; }
.p1 { width: 42px; height: 42px; outline: 4px solid #3a96dd; outline-offset: -4px; }
.p2 { width: 37px; height: 36px; margin-left: 6px; }
.r-foot .upi { margin-left: 27px; }
.side { width: 93px; padding: 95px 0 0 24px; display: flex; flex-direction: column; gap: 37.8px; }
.side svg { width: 34px; height: 34px; }

.modules { height: 68px; background: #c9c9c9; display: flex; align-items: center; font-size: 37px; font-weight: 300; line-height: 60px; padding: 3px 0 0 29px; color: #333; }
.m1 { width: 166px; color: #0f78cc; letter-spacing: -.4px; }
.m2 { width: 200px; letter-spacing: -.5px; }
.m3 { width: 195px; letter-spacing: -1.1px; }
.m4 { width: 134px; letter-spacing: -1.5px; }
.modules svg { width: 32px; height: 6px; margin-top: -6px; }
.status { height: 48px; background: #333; color: #fff; display: flex; align-items: center; font-size: 16px; letter-spacing: 0; padding-left: 21px; }
.count { width: 1133px; margin-top: -3px; }
.online { width: 339px; letter-spacing: .21px; }
.view { width: 68px; height: 47px; background: #000; display: flex; align-items: center; justify-content: center; margin-right: 21px; }
.view svg { width: 26px; height: 25px; }
.book { width: 26px; height: 24px; margin-right: 30px; }
.slider { width: 184px; height: 18px; margin-right: 31px; }
.taskbar2 { height: 40px; background: #67caea; border: solid #555; border-width: 1px 0; display: flex; align-items: center; color: #111; font-size: 12px; letter-spacing: 0; }
.w8 { width: 28px; height: 26px; margin: 0 25px 0 12px; }
.fold { width: 32px; height: 30px; margin-right: 31px; }
.chr { width: 30px; height: 30px; margin-right: 17px; }
.tile { width: 60px; height: 40px; border: 1px solid #333; background: #a0dcf2; display: flex; align-items: center; justify-content: center; }
.tile svg { width: 30px; height: 30px; }
.pc { margin-left: 1545px; width: 39px; }
.raq { width: 12px; font-size: 16px; margin-top: -22px; }
.dark { margin-left: 9px; line-height: 17px; }
```
